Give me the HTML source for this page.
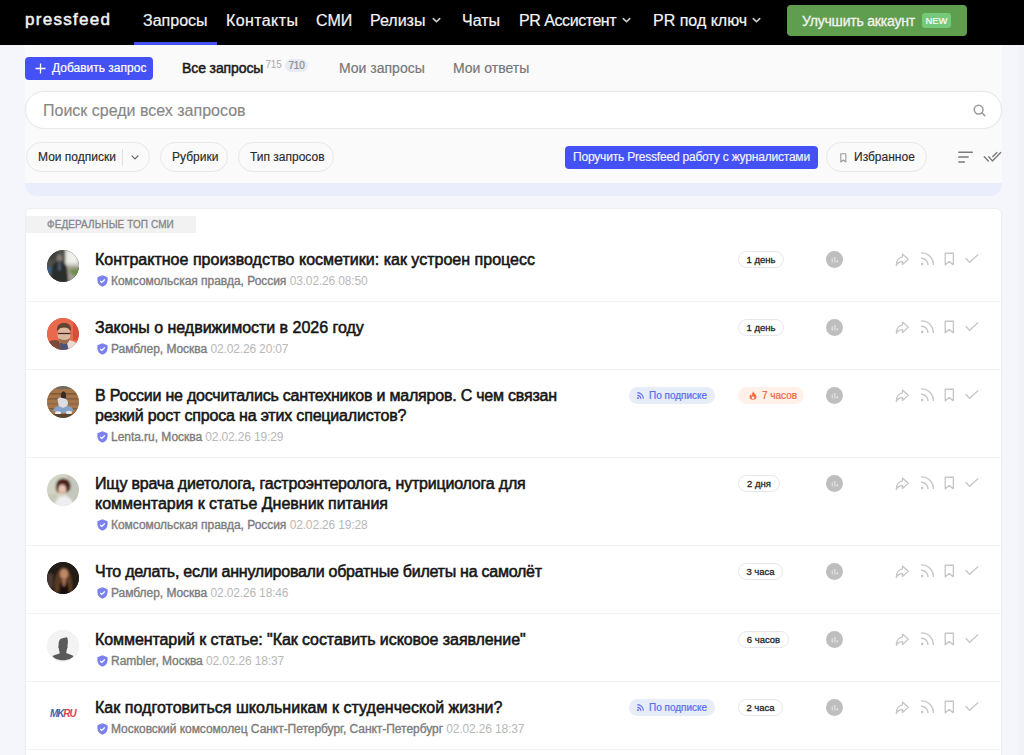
<!DOCTYPE html>
<html><head><meta charset="utf-8">
<style>
*{box-sizing:border-box;margin:0;padding:0}
html,body{width:1024px;height:755px;overflow:hidden}
body{background:#f5f6fb;font-family:"Liberation Sans",sans-serif;color:#111;position:relative}
.abs{position:absolute;white-space:nowrap}
#hdr{position:absolute;left:0;top:0;width:1024px;height:45px;background:#000}
.logo{left:25px;top:10px;font-size:17px;line-height:20px;color:#f2f2f2;letter-spacing:1.3px;-webkit-text-stroke:0.5px #f2f2f2}
.nav{top:11px;font-size:16px;color:#f4f4f4;line-height:20px;-webkit-text-stroke:0.2px #f4f4f4}
.chev{position:absolute;width:6px;height:6px;border-right:1.5px solid #ddd;border-bottom:1.5px solid #ddd;transform:rotate(45deg)}
.uline{left:134px;top:42px;width:83px;height:3px;background:#4452f5}
.gbtn{left:787px;top:5px;width:180px;height:31px;background:#5f9e4e;border-radius:4px}
.gbtn .t{position:absolute;left:15px;top:8px;font-size:14px;line-height:16px;color:#f3f3f3;letter-spacing:-0.2px;-webkit-text-stroke:0.3px #f3f3f3}
.gbtn .new{position:absolute;left:135px;top:7.5px;width:29px;height:15.5px;background:#74c97a;border-radius:3px;color:#ecf7ec;font-size:9.5px;font-weight:bold;text-align:center;line-height:16px}
#panel{position:absolute;left:25px;top:45px;width:977px;height:151px;background:#eaeefc;overflow:hidden;border-radius:0 0 12px 12px}
#panel .in{position:absolute;left:0;top:0;width:977px;height:138px;background:#fafafa}
.addbtn{left:25px;top:57px;width:128px;height:23px;background:#4452f5;border-radius:4px;color:#fff;font-size:12px}
.tab{top:60px;font-size:14px;color:#777;line-height:16px;-webkit-text-stroke:0.2px #777}
.search{left:25px;top:91px;width:977px;height:38px;background:#fff;border:1px solid #e9e9e9;border-radius:19px;box-shadow:0 0 2px rgba(0,0,0,0.05)}
.search .ph{position:absolute;left:17px;top:10px;font-size:16px;line-height:18px;color:#878787;-webkit-text-stroke:0.15px #878787}
.pill{position:absolute;height:30px;top:142px;border:1px solid #e8e8e8;border-radius:15px;background:#fafafa;font-size:12px;color:#2a2a2a;line-height:28px;-webkit-text-stroke:0.15px #2a2a2a}
.bluebtn{left:565px;top:146px;width:253px;height:23px;background:#4452f5;border-radius:4px;color:#f4f4ff;font-size:12px;line-height:23px;-webkit-text-stroke:0.15px #f4f4ff;text-align:center;letter-spacing:-0.2px}
#card{position:absolute;left:25px;top:208px;width:977px;height:560px;background:#fff;border:1px solid #eeeeee;border-radius:6px;overflow:hidden}
.label{position:absolute;left:0;top:7px;width:170px;height:17px;background:#f2f2f2;font-size:10px;letter-spacing:0.08px;color:#878787;-webkit-text-stroke:0.3px #878787;line-height:17px;padding-left:21px}
.row{position:absolute;left:0;width:977px;border-top:1px solid #f3f3f3}
.av{position:absolute;left:21px;width:32px;height:32px;border-radius:50%;overflow:hidden}
.ttl{position:absolute;left:69px;font-size:16px;line-height:20px;color:#151515;white-space:nowrap;-webkit-text-stroke:0.55px #151515}
.meta{position:absolute;left:69px;font-size:12px;line-height:16px;color:#7c7c7c;white-space:nowrap;-webkit-text-stroke:0.35px #7c7c7c;letter-spacing:-0.04px}
.meta .d{color:#b8b8b8;-webkit-text-stroke:0;letter-spacing:-0.15px}
.shield{display:inline-block;vertical-align:-2px;margin-left:2px;margin-right:3px}
.age{position:absolute;height:17px;border:1px solid #e6e6e6;border-radius:9px;font-size:9.5px;color:#262626;-webkit-text-stroke:0.3px #262626;letter-spacing:0px;line-height:15px;text-align:center}
.gc{position:absolute;left:800px;width:17px;height:17px;border-radius:50%;background:#bebebe}
.ico{position:absolute}
.age{left:712px;margin-top:1px}
.gc{margin-top:0.5px}
.sub{position:absolute;margin-top:1px;left:603px;width:86px;height:17px;border-radius:9px;background:#e7edf8;color:#5a6af0;font-size:10px;line-height:17px;-webkit-text-stroke:0.2px #5a6af0}
.hot{position:absolute;margin-top:1px;left:712px;width:66px;height:17px;border-radius:9px;background:#fff1ea;color:#f0653d;font-size:10px;line-height:17px;-webkit-text-stroke:0.2px #f0653d}
.av1{background:radial-gradient(circle at 55% 40%,#9a9a98,#4d4e4c 60%,#2e302e)}
.av2{background:radial-gradient(circle at 50% 50%,#c9875d 0,#a2583c 35%,#e0593f 60%)}
.av3{background:radial-gradient(circle at 50% 50%,#8a8fa0 0,#9c7a5c 40%,#b08a60 70%)}
.av4{background:radial-gradient(circle at 50% 45%,#8a4a3a 0,#d8d0c4 45%,#e6e2d8 70%)}
.av5{background:radial-gradient(circle at 50% 45%,#9b6a50 0,#4a2c20 40%,#1c1412 70%)}
.av6{background:#f0f0f0}
.av7{background:transparent}
</style></head><body>
<div class="abs" style="left:1018px;top:45px;width:6px;height:710px;background:#f2f3f8"></div>
<div id="hdr"></div>
<div class="abs logo">pressfeed</div>
<div class="abs nav" style="left:143px">Запросы</div>
<div class="abs nav" style="left:226px;letter-spacing:0.4px">Контакты</div>
<div class="abs nav" style="left:316px">СМИ</div>
<div class="abs nav" style="left:370px">Релизы</div>
<svg class="ico" style="left:431.5px;top:17px" width="9" height="7" viewBox="0 0 9 7"><path d="M1.3 1.6L4.5 4.8L7.7 1.6" fill="none" stroke="#cfcfcf" stroke-width="1.6" stroke-linecap="round" stroke-linejoin="round"/></svg>
<div class="abs nav" style="left:462px">Чаты</div>
<div class="abs nav" style="left:519px;letter-spacing:-0.45px">PR Ассистент</div>
<svg class="ico" style="left:621.5px;top:17px" width="9" height="7" viewBox="0 0 9 7"><path d="M1.3 1.6L4.5 4.8L7.7 1.6" fill="none" stroke="#cfcfcf" stroke-width="1.6" stroke-linecap="round" stroke-linejoin="round"/></svg>
<div class="abs nav" style="left:653px">PR под ключ</div>
<svg class="ico" style="left:751.5px;top:17px" width="9" height="7" viewBox="0 0 9 7"><path d="M1.3 1.6L4.5 4.8L7.7 1.6" fill="none" stroke="#cfcfcf" stroke-width="1.6" stroke-linecap="round" stroke-linejoin="round"/></svg>
<div class="abs uline"></div>
<div class="abs gbtn"><span class="t">Улучшить аккаунт</span><span class="new">NEW</span></div>

<div id="panel"><div class="in"></div></div>
<div class="abs addbtn"><svg class="ico" style="left:10px;top:6px" width="11" height="11" viewBox="0 0 11 11"><path d="M5.5 0.5v10M0.5 5.5h10" stroke="#fff" stroke-width="1.3"/></svg><span class="abs" style="left:27px;top:4px;font-size:12px;line-height:15px;-webkit-text-stroke:0.2px #fff">Добавить запрос</span></div>
<div class="abs tab" style="left:182px;top:60px;color:#1a1a1a;font-size:14px;letter-spacing:-0.1px;-webkit-text-stroke:0.5px #1a1a1a">Все запросы</div>
<div class="abs" style="left:265.5px;top:59px;font-size:10px;color:#aaa;line-height:11px;letter-spacing:-0.2px">715</div>
<div class="abs" style="left:285px;top:59px;width:23px;height:13px;border-radius:7px;background:#e6ebf4;font-size:10px;color:#8a8a8a;line-height:13px;text-align:center;letter-spacing:-0.2px;-webkit-text-stroke:0.2px #8a8a8a">710</div>
<div class="abs tab" style="left:339px">Мои запросы</div>
<div class="abs tab" style="left:453px">Мои ответы</div>
<div class="abs search"><span class="ph">Поиск среди всех запросов</span><svg class="ico" style="left:947px;top:12px" width="13" height="13" viewBox="0 0 13 13"><circle cx="5.6" cy="5.6" r="4.4" fill="none" stroke="#9a9a9a" stroke-width="1.5"/><path d="M8.8 8.8L11.8 11.8" stroke="#9a9a9a" stroke-width="1.6" stroke-linecap="round"/></svg></div>
<div class="pill" style="left:26px;width:124px"><span class="abs" style="left:11px;top:0">Мои подписки</span><div class="abs" style="left:95px;top:6px;width:1px;height:17px;background:#e2e2e2"></div><svg class="ico" style="left:104px;top:12px" width="8" height="5" viewBox="0 0 8 5"><path d="M0.7 0.7L4 4L7.3 0.7" fill="none" stroke="#666" stroke-width="1.2"/></svg></div>
<div class="pill" style="left:160px;width:68px"><span class="abs" style="left:11px;top:0">Рубрики</span></div>
<div class="pill" style="left:238px;width:96px"><span class="abs" style="left:11px;top:0">Тип запросов</span></div>
<div class="abs bluebtn">Поручить Pressfeed работу с журналистами</div>
<div class="pill" style="left:826px;width:101px"><svg class="ico" style="left:13px;top:10px" width="7" height="10" viewBox="0 0 7 10"><path d="M0.8 0.8h5v8.2L3.3 7L0.8 9z" fill="none" stroke="#9a9a9a" stroke-width="1.1" stroke-linejoin="round"/></svg><span class="abs" style="left:27px;top:0">Избранное</span></div>
<svg class="ico" style="left:957px;top:151px" width="17" height="13" viewBox="0 0 17 13"><path d="M1.8 1.3h13.5M1.8 6.1h9.4M1.8 11h5.6" stroke="#7a7a7a" stroke-width="1.5" stroke-linecap="round"/></svg>
<svg class="ico" style="left:983px;top:151px" width="19" height="12" viewBox="0 0 19 12"><path d="M1.3 5.7L5.4 10.1M5.7 5.7L9.4 9.9L17.7 1.6M9.8 5.4L13.9 1.6" fill="none" stroke="#7a7a7a" stroke-width="1.4" stroke-linecap="round" stroke-linejoin="round"/></svg>

<div id="card">
<div class="label">ФЕДЕРАЛЬНЫЕ ТОП СМИ</div>
<div class="row" style="top:24px;height:68px;border-top:0"><div class="av av1" style="top:17px"><svg width="32" height="32" viewBox="0 0 32 32"><defs><clipPath id="c1"><circle cx="16" cy="16" r="16"/></clipPath><filter id="f1" x="-20%" y="-20%" width="140%" height="140%"><feGaussianBlur stdDeviation="0.85"/></filter></defs><g clip-path="url(#c1)"><g filter="url(#f1)"><rect x="-2" y="-2" width="36" height="36" fill="#4e504c"/>
<rect x="18" y="-2" width="16" height="18" fill="#cfd0ca"/>
<rect x="20" y="2" width="10" height="11" fill="#efefea"/>
<rect x="18" y="16" width="16" height="18" fill="#a39e92"/>
<path d="M22 20L34 18V27L25 25Z" fill="#6f8e4c"/>
<rect x="-2" y="17" width="8" height="7" fill="#3e5e80"/>
<rect x="-2" y="-2" width="12" height="12" fill="#3e423e"/>
<ellipse cx="12.5" cy="8" rx="3" ry="3.6" fill="#857670"/>
<path d="M4 33L5 16C6.5 12.5 9.5 11.5 12.5 11.5C15.5 11.5 19 13.5 20 17L21.5 33Z" fill="#2c2e2c"/>
<rect x="11.5" y="12.5" width="2" height="8" fill="#5a6888"/></g></g></svg></div><div class="ttl" style="top:17px"><span style="display:block;letter-spacing:0.011px">Контрактное производство косметики: как устроен процесс</span></div><div class="meta" style="top:40.4px"><svg class="shield" width="11" height="12" viewBox="0 0 11 12"><path d="M5.5 0.3L10.6 2.2V5.6C10.6 8.6 8.4 10.9 5.5 11.8C2.6 10.9 0.4 8.6 0.4 5.6V2.2Z" fill="#7b82f0"/><path d="M3.2 6L4.8 7.5L7.8 4.5" fill="none" stroke="#fff" stroke-width="1.2"/></svg>Комсомольская правда, Россия <span class="d">03.02.26 08:50</span></div><div class="age" style="top:17px;width:46px">1 день</div><div class="gc" style="top:17px"><svg class="ico" style="left:5px;top:5px" width="8" height="8" viewBox="0 0 8 8"><path d="M1.3 2.2V6.4M3.9 1V6.4M6.3 4V6.4" stroke="#dcdcdc" stroke-width="1.5"/></svg></div><svg class="ico" style="left:868px;top:19px" width="16" height="15" viewBox="0 0 16 15"><path d="M8.5 2.1L14.3 7.3L8.5 12.4V9.7C5.6 9.7 3.6 10.9 2.3 13.4C2.5 8.4 5 5.4 8.5 4.9Z" fill="none" stroke="#c6c6c6" stroke-width="1.3" stroke-linejoin="round"/></svg><svg class="ico" style="left:894px;top:18px" width="15" height="15" viewBox="0 0 15 15"><circle cx="2.2" cy="12.9" r="1.3" fill="#c6c6c6"/><path d="M1.5 7.3A6.3 6.3 0 0 1 7.9 13.5M1.5 1.9A11.7 11.7 0 0 1 13.3 13.5" fill="none" stroke="#c6c6c6" stroke-width="1.4" stroke-linecap="round"/></svg><svg class="ico" style="left:918px;top:19px" width="11" height="14" viewBox="0 0 11 14"><path d="M1.2 1.2H9.4V12.8L5.3 9.6L1.2 12.8Z" fill="none" stroke="#c6c6c6" stroke-width="1.35" stroke-linejoin="round"/></svg><svg class="ico" style="left:939px;top:21px" width="14" height="10" viewBox="0 0 14 10"><path d="M1 4.6L4.6 8.2L12.6 1" fill="none" stroke="#c6c6c6" stroke-width="1.35" stroke-linecap="round"/></svg></div>
<div class="row" style="top:92px;height:69px"><div class="av av2" style="top:16px"><svg width="32" height="32" viewBox="0 0 32 32"><defs><clipPath id="c2"><circle cx="16" cy="16" r="16"/></clipPath><filter id="f2" x="-20%" y="-20%" width="140%" height="140%"><feGaussianBlur stdDeviation="0.75"/></filter></defs><g clip-path="url(#c2)"><g filter="url(#f2)"><rect x="-2" y="-2" width="36" height="36" fill="#e8694e"/>
<rect x="26" y="0" width="8" height="22" fill="#d5503a"/>
<path d="M-1 26C3 22 8 21 12 23L15 33H-1Z" fill="#7a4c3a"/>
<path d="M20 22C24 22 29 24 33 27V33H20Z" fill="#eadbd0"/>
<path d="M13 25H20L22 33H14Z" fill="#4a5478"/>
<ellipse cx="17" cy="16.5" rx="6.5" ry="8" fill="#dcb89e"/>
<path d="M10 13C9.5 7 13 5 17 5C21.5 5 24.5 7.5 24 13C22 10.5 20 9.5 17 9.5C14 9.5 12 10.5 10 13Z" fill="#5e4430"/>
<path d="M11 15.5H23.5" stroke="#3e2c22" stroke-width="1.3"/>
<path d="M11.5 20C12.5 24.5 15 26 17.5 26C20 26 22 24.5 23 20C21 22.5 14 22.5 11.5 20Z" fill="#9a6e4c"/></g></g></svg></div><div class="ttl" style="top:16px"><span style="display:block;letter-spacing:-0.025px">Законы о недвижимости в 2026 году</span></div><div class="meta" style="top:39.4px"><svg class="shield" width="11" height="12" viewBox="0 0 11 12"><path d="M5.5 0.3L10.6 2.2V5.6C10.6 8.6 8.4 10.9 5.5 11.8C2.6 10.9 0.4 8.6 0.4 5.6V2.2Z" fill="#7b82f0"/><path d="M3.2 6L4.8 7.5L7.8 4.5" fill="none" stroke="#fff" stroke-width="1.2"/></svg>Рамблер, Москва <span class="d">02.02.26 20:07</span></div><div class="age" style="top:16px;width:46px">1 день</div><div class="gc" style="top:16px"><svg class="ico" style="left:5px;top:5px" width="8" height="8" viewBox="0 0 8 8"><path d="M1.3 2.2V6.4M3.9 1V6.4M6.3 4V6.4" stroke="#dcdcdc" stroke-width="1.5"/></svg></div><svg class="ico" style="left:868px;top:18px" width="16" height="15" viewBox="0 0 16 15"><path d="M8.5 2.1L14.3 7.3L8.5 12.4V9.7C5.6 9.7 3.6 10.9 2.3 13.4C2.5 8.4 5 5.4 8.5 4.9Z" fill="none" stroke="#c6c6c6" stroke-width="1.3" stroke-linejoin="round"/></svg><svg class="ico" style="left:894px;top:17px" width="15" height="15" viewBox="0 0 15 15"><circle cx="2.2" cy="12.9" r="1.3" fill="#c6c6c6"/><path d="M1.5 7.3A6.3 6.3 0 0 1 7.9 13.5M1.5 1.9A11.7 11.7 0 0 1 13.3 13.5" fill="none" stroke="#c6c6c6" stroke-width="1.4" stroke-linecap="round"/></svg><svg class="ico" style="left:918px;top:18px" width="11" height="14" viewBox="0 0 11 14"><path d="M1.2 1.2H9.4V12.8L5.3 9.6L1.2 12.8Z" fill="none" stroke="#c6c6c6" stroke-width="1.35" stroke-linejoin="round"/></svg><svg class="ico" style="left:939px;top:20px" width="14" height="10" viewBox="0 0 14 10"><path d="M1 4.6L4.6 8.2L12.6 1" fill="none" stroke="#c6c6c6" stroke-width="1.35" stroke-linecap="round"/></svg></div>
<div class="row" style="top:160px;height:89px"><div class="av av3" style="top:16px"><svg width="32" height="32" viewBox="0 0 32 32"><defs><clipPath id="c3"><circle cx="16" cy="16" r="16"/></clipPath><filter id="f3" x="-20%" y="-20%" width="140%" height="140%"><feGaussianBlur stdDeviation="0.75"/></filter></defs><g clip-path="url(#c3)"><g filter="url(#f3)"><rect x="-2" y="-2" width="36" height="36" fill="#a57548"/>
<rect x="-2" y="-2" width="36" height="5" fill="#6e6a62"/>
<rect x="0" y="7" width="32" height="1.6" fill="#7e5a38"/>
<rect x="0" y="12" width="32" height="1.6" fill="#846040"/>
<rect x="0" y="17" width="32" height="1.6" fill="#8a6a4a"/>
<rect x="0" y="22" width="32" height="1.6" fill="#7a6048"/>
<path d="M14 12C13.5 8 14.5 5.5 16.5 5.5C18.5 5.5 19.5 8 19 12L19.5 17H14Z" fill="#3a2a22"/>
<path d="M10.5 13C12 11.5 14 11 15 12L18 12.5C20 13 21 15 21 18L19 22H12Z" fill="#dcdce2"/>
<path d="M6 25C7 21 10 19.5 13 20.5L16 22L19 20.5C23 19.5 26 21 26.5 25L22 27H10Z" fill="#86a2c8"/>
<ellipse cx="11" cy="27" rx="3" ry="1.8" fill="#eeeeee"/>
<ellipse cx="22" cy="26.5" rx="3" ry="1.8" fill="#e6e6e6"/>
<rect x="-2" y="28" width="36" height="6" fill="#5a4432"/></g></g></svg></div><div class="ttl" style="top:16px"><span style="display:block;letter-spacing:-0.212px">В России не досчитались сантехников и маляров. С чем связан</span><span style="display:block;letter-spacing:-0.179px">резкий рост спроса на этих специалистов?</span></div><div class="meta" style="top:59.4px"><svg class="shield" width="11" height="12" viewBox="0 0 11 12"><path d="M5.5 0.3L10.6 2.2V5.6C10.6 8.6 8.4 10.9 5.5 11.8C2.6 10.9 0.4 8.6 0.4 5.6V2.2Z" fill="#7b82f0"/><path d="M3.2 6L4.8 7.5L7.8 4.5" fill="none" stroke="#fff" stroke-width="1.2"/></svg>Lenta.ru, Москва <span class="d">02.02.26 19:29</span></div><div class="sub" style="top:16px"><svg class="ico" style="left:8px;top:5px" width="7" height="7" viewBox="0 0 7 7"><circle cx="1" cy="6" r="1" fill="#6070f0"/><path d="M0.3 3.3A3.4 3.4 0 0 1 3.7 6.7M0.3 0.6A6.1 6.1 0 0 1 6.4 6.7" fill="none" stroke="#6070f0" stroke-width="1.2"/></svg><span class="abs" style="left:20px;top:0">По подписке</span></div><div class="hot" style="top:16px"><svg class="ico" style="left:11px;top:4px" width="8" height="9" viewBox="0 0 8 9"><path d="M4 0.3C4.5 2 7.5 3.5 7.5 6C7.5 7.8 6 8.8 4 8.8C2 8.8 0.5 7.8 0.5 6C0.5 4.5 1.5 3.5 2 3C2 4 2.5 4.8 3 5C3 3.5 3.5 1.5 4 0.3Z" fill="#f26a3f"/><circle cx="4" cy="6.8" r="1.3" fill="#fff3ec"/></svg><span class="abs" style="left:24px;top:0">7 часов</span></div><div class="gc" style="top:16px"><svg class="ico" style="left:5px;top:5px" width="8" height="8" viewBox="0 0 8 8"><path d="M1.3 2.2V6.4M3.9 1V6.4M6.3 4V6.4" stroke="#dcdcdc" stroke-width="1.5"/></svg></div><svg class="ico" style="left:868px;top:18px" width="16" height="15" viewBox="0 0 16 15"><path d="M8.5 2.1L14.3 7.3L8.5 12.4V9.7C5.6 9.7 3.6 10.9 2.3 13.4C2.5 8.4 5 5.4 8.5 4.9Z" fill="none" stroke="#c6c6c6" stroke-width="1.3" stroke-linejoin="round"/></svg><svg class="ico" style="left:894px;top:17px" width="15" height="15" viewBox="0 0 15 15"><circle cx="2.2" cy="12.9" r="1.3" fill="#c6c6c6"/><path d="M1.5 7.3A6.3 6.3 0 0 1 7.9 13.5M1.5 1.9A11.7 11.7 0 0 1 13.3 13.5" fill="none" stroke="#c6c6c6" stroke-width="1.4" stroke-linecap="round"/></svg><svg class="ico" style="left:918px;top:18px" width="11" height="14" viewBox="0 0 11 14"><path d="M1.2 1.2H9.4V12.8L5.3 9.6L1.2 12.8Z" fill="none" stroke="#c6c6c6" stroke-width="1.35" stroke-linejoin="round"/></svg><svg class="ico" style="left:939px;top:20px" width="14" height="10" viewBox="0 0 14 10"><path d="M1 4.6L4.6 8.2L12.6 1" fill="none" stroke="#c6c6c6" stroke-width="1.35" stroke-linecap="round"/></svg></div>
<div class="row" style="top:248px;height:89px"><div class="av av4" style="top:16px"><svg width="32" height="32" viewBox="0 0 32 32"><defs><clipPath id="c4"><circle cx="16" cy="16" r="16"/></clipPath><filter id="f4" x="-20%" y="-20%" width="140%" height="140%"><feGaussianBlur stdDeviation="0.8"/></filter></defs><g clip-path="url(#c4)"><g filter="url(#f4)"><rect x="-2" y="-2" width="36" height="36" fill="#d2d4c4"/>
<rect x="20" y="-2" width="14" height="36" fill="#c4c7bc"/>
<rect x="-2" y="20" width="12" height="14" fill="#c8cab8"/>
<path d="M7 33C8 26 12 22 17 22C22 22 26 26 27 33Z" fill="#eeedf0"/>
<path d="M9 16C8 9 11 4.5 16 4.5C21 4.5 24 8 23.5 13C23 17 21 18 19.5 18.5L12 19C10.5 18.5 9.5 17.5 9 16Z" fill="#4e2418"/>
<ellipse cx="15.2" cy="15.5" rx="4" ry="5" fill="#e6c4b4"/>
<rect x="13.6" y="18" width="3" height="1.1" fill="#d47a72"/></g></g></svg></div><div class="ttl" style="top:16px"><span style="display:block;letter-spacing:-0.207px">Ищу врача диетолога, гастроэнтеролога, нутрициолога для</span><span style="display:block;letter-spacing:-0.009px">комментария к статье Дневник питания</span></div><div class="meta" style="top:59.4px"><svg class="shield" width="11" height="12" viewBox="0 0 11 12"><path d="M5.5 0.3L10.6 2.2V5.6C10.6 8.6 8.4 10.9 5.5 11.8C2.6 10.9 0.4 8.6 0.4 5.6V2.2Z" fill="#7b82f0"/><path d="M3.2 6L4.8 7.5L7.8 4.5" fill="none" stroke="#fff" stroke-width="1.2"/></svg>Комсомольская правда, Россия <span class="d">02.02.26 19:28</span></div><div class="age" style="top:16px;width:42px">2 дня</div><div class="gc" style="top:16px"><svg class="ico" style="left:5px;top:5px" width="8" height="8" viewBox="0 0 8 8"><path d="M1.3 2.2V6.4M3.9 1V6.4M6.3 4V6.4" stroke="#dcdcdc" stroke-width="1.5"/></svg></div><svg class="ico" style="left:868px;top:18px" width="16" height="15" viewBox="0 0 16 15"><path d="M8.5 2.1L14.3 7.3L8.5 12.4V9.7C5.6 9.7 3.6 10.9 2.3 13.4C2.5 8.4 5 5.4 8.5 4.9Z" fill="none" stroke="#c6c6c6" stroke-width="1.3" stroke-linejoin="round"/></svg><svg class="ico" style="left:894px;top:17px" width="15" height="15" viewBox="0 0 15 15"><circle cx="2.2" cy="12.9" r="1.3" fill="#c6c6c6"/><path d="M1.5 7.3A6.3 6.3 0 0 1 7.9 13.5M1.5 1.9A11.7 11.7 0 0 1 13.3 13.5" fill="none" stroke="#c6c6c6" stroke-width="1.4" stroke-linecap="round"/></svg><svg class="ico" style="left:918px;top:18px" width="11" height="14" viewBox="0 0 11 14"><path d="M1.2 1.2H9.4V12.8L5.3 9.6L1.2 12.8Z" fill="none" stroke="#c6c6c6" stroke-width="1.35" stroke-linejoin="round"/></svg><svg class="ico" style="left:939px;top:20px" width="14" height="10" viewBox="0 0 14 10"><path d="M1 4.6L4.6 8.2L12.6 1" fill="none" stroke="#c6c6c6" stroke-width="1.35" stroke-linecap="round"/></svg></div>
<div class="row" style="top:336px;height:69px"><div class="av av5" style="top:16px"><svg width="32" height="32" viewBox="0 0 32 32"><defs><clipPath id="c5"><circle cx="16" cy="16" r="16"/></clipPath><filter id="f5" x="-20%" y="-20%" width="140%" height="140%"><feGaussianBlur stdDeviation="0.9"/></filter></defs><g clip-path="url(#c5)"><g filter="url(#f5)"><rect x="-2" y="-2" width="36" height="36" fill="#241c18"/>
<rect x="0" y="12" width="6" height="14" fill="#4a3a36"/>
<path d="M8 30C6 20 9 8 16 5C22 6 26 14 25 30Z" fill="#5a3a24"/>
<ellipse cx="17" cy="12" rx="4" ry="5" fill="#c08a6a"/>
<path d="M13 22C15 20 19 20 21 22L22 32H12Z" fill="#140e0c"/>
<path d="M15 17L19 17L18 24L16 24Z" fill="#a87058"/></g></g></svg></div><div class="ttl" style="top:16px"><span style="display:block;letter-spacing:-0.253px">Что делать, если аннулировали обратные билеты на самолёт</span></div><div class="meta" style="top:39.4px"><svg class="shield" width="11" height="12" viewBox="0 0 11 12"><path d="M5.5 0.3L10.6 2.2V5.6C10.6 8.6 8.4 10.9 5.5 11.8C2.6 10.9 0.4 8.6 0.4 5.6V2.2Z" fill="#7b82f0"/><path d="M3.2 6L4.8 7.5L7.8 4.5" fill="none" stroke="#fff" stroke-width="1.2"/></svg>Рамблер, Москва <span class="d">02.02.26 18:46</span></div><div class="age" style="top:16px;width:45px">3 часа</div><div class="gc" style="top:16px"><svg class="ico" style="left:5px;top:5px" width="8" height="8" viewBox="0 0 8 8"><path d="M1.3 2.2V6.4M3.9 1V6.4M6.3 4V6.4" stroke="#dcdcdc" stroke-width="1.5"/></svg></div><svg class="ico" style="left:868px;top:18px" width="16" height="15" viewBox="0 0 16 15"><path d="M8.5 2.1L14.3 7.3L8.5 12.4V9.7C5.6 9.7 3.6 10.9 2.3 13.4C2.5 8.4 5 5.4 8.5 4.9Z" fill="none" stroke="#c6c6c6" stroke-width="1.3" stroke-linejoin="round"/></svg><svg class="ico" style="left:894px;top:17px" width="15" height="15" viewBox="0 0 15 15"><circle cx="2.2" cy="12.9" r="1.3" fill="#c6c6c6"/><path d="M1.5 7.3A6.3 6.3 0 0 1 7.9 13.5M1.5 1.9A11.7 11.7 0 0 1 13.3 13.5" fill="none" stroke="#c6c6c6" stroke-width="1.4" stroke-linecap="round"/></svg><svg class="ico" style="left:918px;top:18px" width="11" height="14" viewBox="0 0 11 14"><path d="M1.2 1.2H9.4V12.8L5.3 9.6L1.2 12.8Z" fill="none" stroke="#c6c6c6" stroke-width="1.35" stroke-linejoin="round"/></svg><svg class="ico" style="left:939px;top:20px" width="14" height="10" viewBox="0 0 14 10"><path d="M1 4.6L4.6 8.2L12.6 1" fill="none" stroke="#c6c6c6" stroke-width="1.35" stroke-linecap="round"/></svg></div>
<div class="row" style="top:404px;height:69px"><div class="av av6" style="top:16px"><svg width="32" height="32" viewBox="0 0 32 32"><circle cx="16" cy="16" r="16" fill="#f3f3f3"/><path d="M13 9.5C13.5 8.3 17 7.8 19.8 7.2C20.5 7.8 20.8 8.6 20.6 9.6C21.2 11 21 13.5 20.4 15.5C20.8 16.5 20.8 17.8 20 18.5C19.8 20 19.4 21.8 19.2 23C21.5 24.3 25 24.8 26.5 26C25 28.8 20.5 30.2 16 30.2C11.5 30.2 7 28.8 5.5 26C7.5 24.8 11 24.2 12.8 23.2C12.4 21.6 12 20.2 11.8 18.6C11.2 17.8 11 16.6 11.6 15.6C11.5 13.2 11.8 11 13 9.5Z" fill="#5a5a5a"/></svg></div><div class="ttl" style="top:16px"><span style="display:block;letter-spacing:-0.08px">Комментарий к статье: "Как составить исковое заявление"</span></div><div class="meta" style="top:39.4px"><svg class="shield" width="11" height="12" viewBox="0 0 11 12"><path d="M5.5 0.3L10.6 2.2V5.6C10.6 8.6 8.4 10.9 5.5 11.8C2.6 10.9 0.4 8.6 0.4 5.6V2.2Z" fill="#7b82f0"/><path d="M3.2 6L4.8 7.5L7.8 4.5" fill="none" stroke="#fff" stroke-width="1.2"/></svg>Rambler, Москва <span class="d">02.02.26 18:37</span></div><div class="age" style="top:16px;width:51px">6 часов</div><div class="gc" style="top:16px"><svg class="ico" style="left:5px;top:5px" width="8" height="8" viewBox="0 0 8 8"><path d="M1.3 2.2V6.4M3.9 1V6.4M6.3 4V6.4" stroke="#dcdcdc" stroke-width="1.5"/></svg></div><svg class="ico" style="left:868px;top:18px" width="16" height="15" viewBox="0 0 16 15"><path d="M8.5 2.1L14.3 7.3L8.5 12.4V9.7C5.6 9.7 3.6 10.9 2.3 13.4C2.5 8.4 5 5.4 8.5 4.9Z" fill="none" stroke="#c6c6c6" stroke-width="1.3" stroke-linejoin="round"/></svg><svg class="ico" style="left:894px;top:17px" width="15" height="15" viewBox="0 0 15 15"><circle cx="2.2" cy="12.9" r="1.3" fill="#c6c6c6"/><path d="M1.5 7.3A6.3 6.3 0 0 1 7.9 13.5M1.5 1.9A11.7 11.7 0 0 1 13.3 13.5" fill="none" stroke="#c6c6c6" stroke-width="1.4" stroke-linecap="round"/></svg><svg class="ico" style="left:918px;top:18px" width="11" height="14" viewBox="0 0 11 14"><path d="M1.2 1.2H9.4V12.8L5.3 9.6L1.2 12.8Z" fill="none" stroke="#c6c6c6" stroke-width="1.35" stroke-linejoin="round"/></svg><svg class="ico" style="left:939px;top:20px" width="14" height="10" viewBox="0 0 14 10"><path d="M1 4.6L4.6 8.2L12.6 1" fill="none" stroke="#c6c6c6" stroke-width="1.35" stroke-linecap="round"/></svg></div>
<div class="row" style="top:472px;height:69px"><div class="av av7" style="top:16px"><svg width="32" height="32" viewBox="0 0 32 32"><text x="3" y="19" font-family="Liberation Sans" font-weight="bold" font-style="italic" font-size="10" letter-spacing="-1.1"><tspan fill="#3a64ae">MK</tspan><tspan fill="#d8454c">RU</tspan></text></svg></div><div class="ttl" style="top:16px"><span style="display:block;letter-spacing:0.027px">Как подготовиться школьникам к студенческой жизни?</span></div><div class="meta" style="top:39.4px"><svg class="shield" width="11" height="12" viewBox="0 0 11 12"><path d="M5.5 0.3L10.6 2.2V5.6C10.6 8.6 8.4 10.9 5.5 11.8C2.6 10.9 0.4 8.6 0.4 5.6V2.2Z" fill="#7b82f0"/><path d="M3.2 6L4.8 7.5L7.8 4.5" fill="none" stroke="#fff" stroke-width="1.2"/></svg>Московский комсомолец Санкт-Петербург, Санкт-Петербург <span class="d">02.02.26 18:37</span></div><div class="sub" style="top:16px"><svg class="ico" style="left:8px;top:5px" width="7" height="7" viewBox="0 0 7 7"><circle cx="1" cy="6" r="1" fill="#6070f0"/><path d="M0.3 3.3A3.4 3.4 0 0 1 3.7 6.7M0.3 0.6A6.1 6.1 0 0 1 6.4 6.7" fill="none" stroke="#6070f0" stroke-width="1.2"/></svg><span class="abs" style="left:20px;top:0">По подписке</span></div><div class="age" style="top:16px;width:45px">2 часа</div><div class="gc" style="top:16px"><svg class="ico" style="left:5px;top:5px" width="8" height="8" viewBox="0 0 8 8"><path d="M1.3 2.2V6.4M3.9 1V6.4M6.3 4V6.4" stroke="#dcdcdc" stroke-width="1.5"/></svg></div><svg class="ico" style="left:868px;top:18px" width="16" height="15" viewBox="0 0 16 15"><path d="M8.5 2.1L14.3 7.3L8.5 12.4V9.7C5.6 9.7 3.6 10.9 2.3 13.4C2.5 8.4 5 5.4 8.5 4.9Z" fill="none" stroke="#c6c6c6" stroke-width="1.3" stroke-linejoin="round"/></svg><svg class="ico" style="left:894px;top:17px" width="15" height="15" viewBox="0 0 15 15"><circle cx="2.2" cy="12.9" r="1.3" fill="#c6c6c6"/><path d="M1.5 7.3A6.3 6.3 0 0 1 7.9 13.5M1.5 1.9A11.7 11.7 0 0 1 13.3 13.5" fill="none" stroke="#c6c6c6" stroke-width="1.4" stroke-linecap="round"/></svg><svg class="ico" style="left:918px;top:18px" width="11" height="14" viewBox="0 0 11 14"><path d="M1.2 1.2H9.4V12.8L5.3 9.6L1.2 12.8Z" fill="none" stroke="#c6c6c6" stroke-width="1.35" stroke-linejoin="round"/></svg><svg class="ico" style="left:939px;top:20px" width="14" height="10" viewBox="0 0 14 10"><path d="M1 4.6L4.6 8.2L12.6 1" fill="none" stroke="#c6c6c6" stroke-width="1.35" stroke-linecap="round"/></svg></div>
<div class="row" style="top:540px;height:69px"></div>
</div>
</body></html>
